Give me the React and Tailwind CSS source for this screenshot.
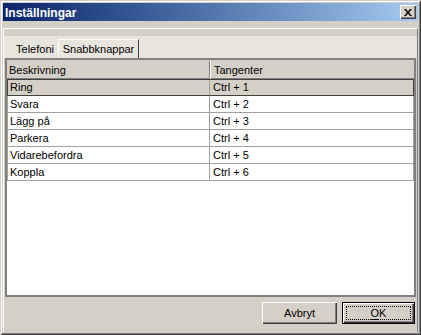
const rows = [
  { name: "Ring", keys: "Ctrl + 1" },
  { name: "Svara", keys: "Ctrl + 2" },
  { name: "Lägg på", keys: "Ctrl + 3" },
  { name: "Parkera", keys: "Ctrl + 4" },
  { name: "Vidarebefordra", keys: "Ctrl + 5" },
  { name: "Koppla", keys: "Ctrl + 6" },
];

export default function App() {
  return (
    <div
      className="w-[421px] h-[335px] bg-[#d4d0c8] p-[3px] flex flex-col text-black text-[11px] leading-none
                 shadow-[inset_1px_1px_0_#d4d0c8,inset_-1px_-1px_0_#404040,inset_2px_2px_0_#ffffff,inset_-2px_-2px_0_#808080]"
      style={{ fontFamily: '"Liberation Sans", Arial, sans-serif' }}
    >
      {/* TITLE BAR */}
      <div className="h-[18px] flex items-center justify-between pl-[2px] pr-[2px] bg-gradient-to-r from-[#0a246a] to-[#a6caf0]">
        <span className="text-white font-bold text-[12px] pt-[1px]">Inställningar</span>
        <button className="w-[16px] h-[14px] bg-[#d4d0c8] flex items-center justify-center shadow-[inset_1px_1px_0_#ffffff,inset_-1px_-1px_0_#404040,inset_-2px_-2px_0_#808080]">
          <svg width="8" height="7" viewBox="0 0 8 7">
            <path d="M0 0h2l2 2.5L6 0h2L5 3.5 8 7H6L4 4.5 2 7H0l3-3.5z" fill="#000" />
          </svg>
        </button>
      </div>

      {/* PANEL */}
      <div className="mt-[7px] flex-1 flex flex-col border-t border-l border-white border-r border-r-[#808080]">
        <div className="h-[7px] bg-[#d4d0c8]" />

        {/* TABS */}
        <div className="h-[22px] bg-[#e8e5de] flex items-end pl-[8px]">
          <div className="h-[18px] w-[46px] flex items-center justify-center pt-[1px]">Telefoni</div>
          <div className="h-[19px] w-[81px] flex items-center justify-center bg-[#e8e5de] border-t border-l border-white border-r border-r-[#404040] pt-[1px]">
            Snabbknappar
          </div>
        </div>

        {/* LIST VIEW */}
        <div className="ml-[1px] mr-[1px] h-[239px] border-2 border-[#808080] bg-white flex flex-col">
          <div className="h-[19px] flex bg-[#d4d0c8] border-t border-[#d4d0c8] shadow-[inset_0_-1px_0_#808080]">
            <div className="w-[203px] flex items-center pl-[2px] border-r border-[#808080]">Beskrivning</div>
            <div className="flex-1 flex items-center pl-[3px] border-l border-white">Tangenter</div>
          </div>
          {rows.map((r, i) => (
            <div
              key={r.name}
              className={`h-[17px] flex border-b ${
                i === 0 ? "bg-[#d4d0c8] border border-[#404040]" : "border-[#a0a0a0] border-x border-x-[#a0a0a0]"
              }`}
            >
              <div className="w-[202px] flex items-center pl-[2px] border-r border-[#a0a0a0]">{r.name}</div>
              <div className="flex-1 flex items-center pl-[3px]">{r.keys}</div>
            </div>
          ))}
        </div>

        {/* BUTTONS */}
        <div className="flex-1 flex justify-end items-start pt-[5px] pr-[2px] gap-[5px]">
          <button className="w-[75px] h-[22px] bg-[#d4d0c8] flex items-center justify-center shadow-[inset_1px_1px_0_#ffffff,inset_-1px_-1px_0_#404040,inset_-2px_-2px_0_#808080]">
            Avbryt
          </button>
          <button className="w-[73px] h-[22px] bg-[#d4d0c8] border border-black p-[3px] shadow-[inset_1px_1px_0_#ffffff,inset_-1px_-1px_0_#404040,inset_-2px_-2px_0_#808080]">
            <span className="w-full h-full flex items-center justify-center border border-dotted border-black">
              <span className="underline underline-offset-2">O</span>K
            </span>
          </button>
        </div>
      </div>
    </div>
  );
}
